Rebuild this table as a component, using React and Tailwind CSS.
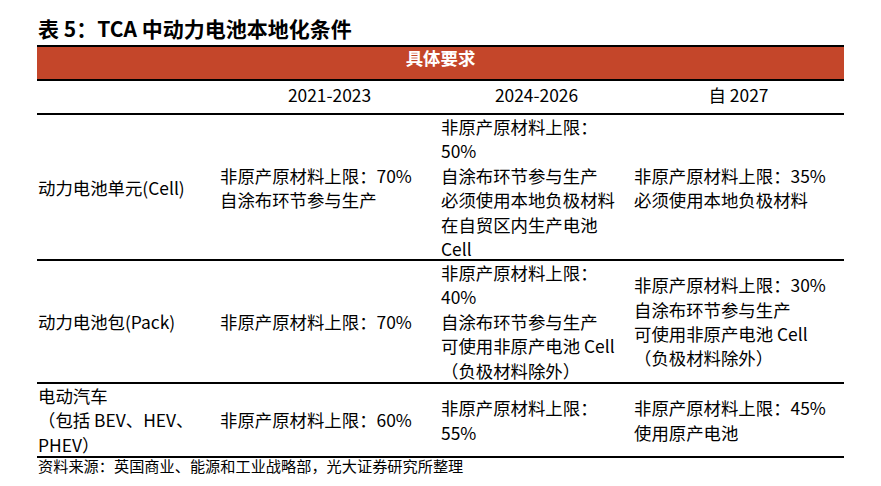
import React from "react";

const cell = "flex flex-col justify-center pl-[1px] pb-[4px] whitespace-nowrap";

function Lines({ lines }) {
  return (
    <div className={cell}>
      {lines.map((l, i) => (
        <div key={i}>{l}</div>
      ))}
    </div>
  );
}

export default function App() {
  return (
    <div className="w-[881px] h-[486px] bg-white text-black font-['Noto_Sans_CJK_SC','Noto_Sans',sans-serif] overflow-hidden">
      <div className="box-border h-[45px] pt-[14px] pl-[38px] text-[21px] font-bold leading-[28px]">
        表 5：TCA 中动力电池本地化条件
      </div>
      <div className="ml-[37px] w-[807px] border-t-2 border-black text-[17.4px] leading-[24.4px]">
        <div className="box-border h-[34px] border-b-2 border-black bg-[#C4462A] text-white font-bold text-center leading-[22px]">
          具体要求
        </div>
        <div className="box-border h-[34px] pb-[4px] border-b-2 border-black grid grid-cols-[182px_221px_193px_211px] items-center text-center">
          <div></div>
          <div>2021-2023</div>
          <div>2024-2026</div>
          <div>自 2027</div>
        </div>
        <div className="box-border h-[146px] border-b-2 border-black grid grid-cols-[182px_221px_193px_211px]">
          <Lines lines={["动力电池单元(Cell)"]} />
          <Lines lines={["非原产原材料上限：70%", "自涂布环节参与生产"]} />
          <Lines
            lines={[
              "非原产原材料上限：",
              "50%",
              "自涂布环节参与生产",
              "必须使用本地负极材料",
              "在自贸区内生产电池",
              "Cell",
            ]}
          />
          <Lines lines={["非原产原材料上限：35%", "必须使用本地负极材料"]} />
        </div>
        <div className="box-border h-[123px] border-b-2 border-black grid grid-cols-[182px_221px_193px_211px]">
          <Lines lines={["动力电池包(Pack)"]} />
          <Lines lines={["非原产原材料上限：70%"]} />
          <Lines
            lines={[
              "非原产原材料上限：",
              "40%",
              "自涂布环节参与生产",
              "可使用非原产电池 Cell",
              "（负极材料除外）",
            ]}
          />
          <Lines
            lines={[
              "非原产原材料上限：30%",
              "自涂布环节参与生产",
              "可使用非原产电池 Cell",
              "（负极材料除外）",
            ]}
          />
        </div>
        <div className="box-border h-[74px] border-b-2 border-black grid grid-cols-[182px_221px_193px_211px]">
          <Lines lines={["电动汽车", "（包括 BEV、HEV、", "PHEV）"]} />
          <Lines lines={["非原产原材料上限：60%"]} />
          <Lines lines={["非原产原材料上限：", "55%"]} />
          <Lines lines={["非原产原材料上限：45%", "使用原产电池"]} />
        </div>
      </div>
      <div className="pl-[38px] text-[15.2px] leading-[14px]">
        资料来源：英国商业、能源和工业战略部，光大证券研究所整理
      </div>
    </div>
  );
}
